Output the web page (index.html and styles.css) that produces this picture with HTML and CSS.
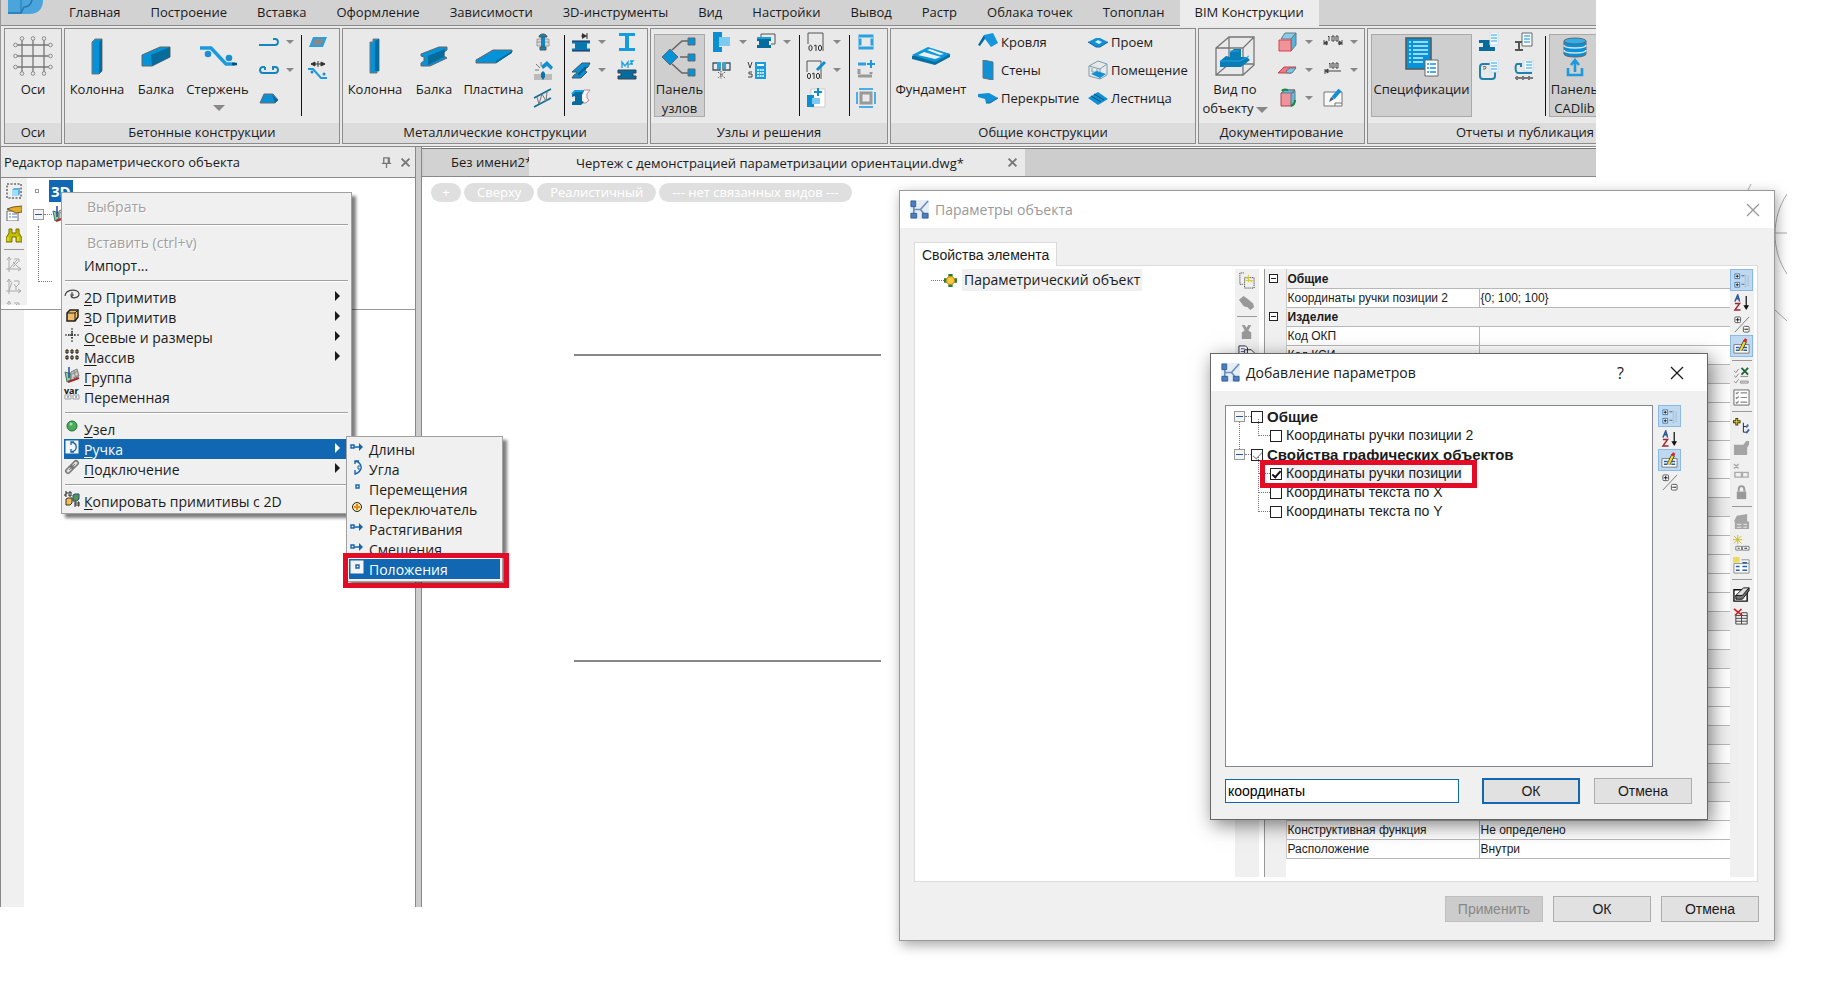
FILE: index.html
```
<!DOCTYPE html>
<html lang="ru">

<head>
    <meta charset="UTF-8">
    <meta name="viewport" content="width=device-width, initial-scale=1.0">
    <title>BIM Конструкции</title>
    <link rel="stylesheet" href="styles.css">
</head>

<body>
    <!-- icons -->
    <svg class="sprite" aria-hidden="true">
        <symbol id="axes" viewBox="0 0 40 40"><path d="M9 4v32M20 4v32M31 4v32M4 9h32M4 20h32M4 31h32" stroke="#777" stroke-width="1.3" fill="none"/><g fill="#eee" stroke="#888"><circle cx="9" cy="2.500" r="1.800"/><circle cx="20" cy="2.500" r="1.800"/><circle cx="31" cy="2.500" r="1.800"/><circle cx="9" cy="37.500" r="1.800"/><circle cx="20" cy="37.500" r="1.800"/><circle cx="31" cy="37.500" r="1.800"/><circle cx="2.500" cy="9" r="1.800"/><circle cx="2.500" cy="20" r="1.800"/><circle cx="2.500" cy="31" r="1.800"/><circle cx="37.500" cy="9" r="1.800"/><circle cx="37.500" cy="20" r="1.800"/><circle cx="37.500" cy="31" r="1.800"/></g></symbol>
        <symbol id="column" viewBox="0 0 40 40"><path d="M15 6l3-3h7v32l-3 3h-7z" fill="#0492d8" stroke="#777"/><path d="M22 6l3-3v32l-3 3z" fill="#076b9c"/></symbol>
        <symbol id="beam" viewBox="0 0 40 40"><path d="M6 19l18-8h10v10l-18 9H6z" fill="#0492d8" stroke="#666"/><path d="M15 19l19-8v10l-18 9z" fill="#076b9c"/></symbol>
        <symbol id="rod" viewBox="0 0 40 40"><path d="M2 12h11l15 16h9" fill="none" stroke="#1c9ae0" stroke-width="3.500"/><circle cx="10" cy="18" r="3.300" fill="#1c8fd2"/><circle cx="31" cy="22" r="3.300" fill="#1c8fd2"/><path d="M34 28h5" stroke="#064d75" stroke-width="2.500"/></symbol>
        <symbol id="steel-column" viewBox="0 0 40 40"><path d="M15 6h3V3h6v32h-2v2h-7z" fill="#0492d8" stroke="#777"/><path d="M20 5l4-2v32h-4z" fill="#076b9c"/></symbol>
        <symbol id="steel-beam" viewBox="0 0 40 40"><path d="M7 18L25 11h8v3l-3 2v4l3 2-17 8H7v-3l3-2v-4l-3-1z" fill="#0492d8" stroke="#666"/><path d="M14 20l17-7-1 8-16 8z" fill="#076b9c"/></symbol>
        <symbol id="plate" viewBox="0 0 40 40"><path d="M2 24l17-10h19v2L22 27H2z" fill="#0492d8" stroke="#666"/><path d="M22 25l16-10v2L22 27z" fill="#076b9c"/></symbol>
        <symbol id="nodes" viewBox="0 0 40 40"><path d="M12 13l10-9h7M20 20h8M12 27l10 9h7" stroke="#666" stroke-width="1.600" fill="none"/><path d="M10 12l8 8-8 8-8-8zM28 1h7v7h-7zM28 17h7v7h-7zM28 32h7v7h-7z" fill="#0492d8" stroke="#666"/></symbol>
        <symbol id="foundation" viewBox="0 0 40 40"><path d="M1 20l16-8 22 6v3l-15 8L1 23z" fill="#066f9f"/><path d="M1 19l16-8 22 7-15 8z" fill="#0c98dc"/><path d="M7 19l6-3 17 5-6 2zM16 14l3-1 14 5-4 1z" fill="#eee"/></symbol>
        <symbol id="view-cube" viewBox="0 0 40 40"><path d="M1 12L14 1h25v28L28 39H1zM1 12h27v27M28 12L39 1M14 1v27L1 39M14 28h25" fill="none" stroke="#777" stroke-width="1.300"/><path d="M5 25l6-5 4 1v-5l4-3h7v8h6l3 3-9 7H5z" fill="#087db8"/><path d="M5 25h20l9-5M15 15h9" stroke="#25a3e3" fill="none"/></symbol>
        <symbol id="spec" viewBox="0 0 40 40"><path d="M4 1h25v31H4z" fill="#0492d8" stroke="#555" stroke-width="1.500"/><path d="M7 5h2m2 0h15M7 9h2m2 0h15M7 13h2m2 0h15M7 17h2m2 0h15M7 21h2m2 0h10M7 25h2m2 0h10" stroke="#cdeeff" stroke-width="1.300"/><path d="M23 23h13v16H23z" fill="#fff" stroke="#666"/><path d="M25 27h2m1 0h6m-9 4h2m1 0h6m-9 4h2m1 0h6" stroke="#1397dc" stroke-width="1.300"/></symbol>
        <symbol id="database" viewBox="0 0 40 40"><path d="M9 4v13c0 4 22 4 22 0V4z" fill="#0492d8" stroke="#666"/><ellipse cx="20" cy="4" rx="11" ry="3" fill="#2fb0ee" stroke="#666"/><path d="M9 8c0 4 22 4 22 0M9 13c0 4 22 4 22 0" fill="none" stroke="#ddd" stroke-width="1.600"/><path d="M20 35V24m-4 4l4-5 4 5M13 31v7h14v-7" fill="none" stroke="#1c9ae0" stroke-width="2.600"/></symbol>

        <symbol id="hook1" viewBox="0 0 20 20"><path d="M0 13h16c4 0 4-6 0-6h-2" fill="none" stroke="#1685bd" stroke-width="1.800"/></symbol>
        <symbol id="hook2" viewBox="0 0 20 20"><path d="M6 7H4c-4 0-4 6 0 6h12c4 0 4-6 0-6h-2v3M6 7v3" fill="none" stroke="#1685bd" stroke-width="1.900"/></symbol>
        <symbol id="prism" viewBox="0 0 20 20"><path d="M1 15L5 6h9l5 6-3 3z" fill="#0b8fd0" stroke="#667"/><path d="M13 7l6 5-3 3z" fill="#076b9c"/></symbol>
        <symbol id="slab" viewBox="0 0 20 20"><path d="M5 5h14l-4 10H1z" fill="#27a1e2"/><path d="M7 7h9l-3 6H4z" fill="#888"/></symbol>
        <symbol id="stretch-rod" viewBox="0 0 20 20"><path d="M3 4h14M3 4l4-2v4zM17 4l-4-2v4zM10 1v6" stroke="#333" fill="#333"/><path d="M0 9h5l8 9h6" fill="none" stroke="#1c9ae0" stroke-width="2"/><circle cx="4" cy="12" r="1.500" fill="#178bc9"/><circle cx="16" cy="14" r="1.500" fill="#178bc9"/></symbol>
        <symbol id="bolt" viewBox="0 0 20 20"><path d="M4 7h12v7H4z" fill="#d8d8d8" stroke="#999"/><path d="M4 10h12" stroke="#999"/><path d="M10 3v14" stroke="#0b86c2" stroke-width="4"/><path d="M6 5c0-4 8-4 8 0zM7 15h6v3H7z" fill="#0b86c2" stroke="#555"/></symbol>
        <symbol id="weld" viewBox="0 0 20 20"><path d="M1 14h18v6H1z" fill="#bbb"/><path d="M8 6l6-5 6 6-2 3-4-4-4 3z" fill="#118fd0"/><path d="M8 13l2-2 2 2v4l-2 3-2-3z" fill="#0874a9"/><path d="M3 4l4 4M2 10h4M8 2v4" stroke="#777"/></symbol>
        <symbol id="truss" viewBox="0 0 20 20"><path d="M1 10L18 1M1 19l17-9" stroke="#156f94" stroke-width="1.700"/><path d="M4 9l2 7 3-10 4 7 1-9" fill="none" stroke="#777"/></symbol>
        <symbol id="ibeam-x" viewBox="0 0 20 20"><path d="M1 9h18v2.500h-3v5h3V19H1v-2.500h3v-5H1z" fill="#0779ae"/><path d="M1 9h18M1 19h18" stroke="#225"/><path d="M10 4h6m0-3v6" stroke="#333"/><path d="M11 1l5 3-5 3z" fill="#333"/></symbol>
        <symbol id="ibeam-skew" viewBox="0 0 20 20"><path d="M1 12L11 3h8l-2 4-2 1-1 3 2 1-6 6H1l2-3 2-1 1-2z" fill="#0b8fd0" stroke="#456"/><path d="M7 15l8-8" stroke="#065f8c" stroke-width="2"/></symbol>
        <symbol id="ibeam-cut" viewBox="0 0 20 20"><path d="M10 4l3-2h6l-3 4v4l2 2-3 3h-4" fill="#f6f6f6" stroke="#b88"/><path d="M1 6l3-3h9l-2 4v6l2 1-3 3H1v-3l3-1V8L1 9z" fill="#076b9c"/><path d="M1 6l3-3h9" stroke="#159ee2" stroke-width="2" fill="none"/></symbol>
        <symbol id="ibeam" viewBox="0 0 20 20"><path d="M2 1h16v3H2zM2 16h16v3H2zM8 3h4v14H8z" fill="#149ce0"/></symbol>
        <symbol id="ibeam-area" viewBox="0 0 20 20"><path d="M1 10h18v3h-3v3h3v3H1v-3h3v-3H1z" fill="#076b9c" stroke="#345"/><path d="M5 8V2l3 4 3-4v6M13 1h3l-3 3h3" stroke="#159ee2" stroke-width="1.300" fill="none"/></symbol>
        <symbol id="join" viewBox="0 0 20 20"><path d="M1 0h9v5H7v10h3v5H1z" fill="#0b8fd0"/><path d="M7 5h11v9H7z" fill="#7cc9f2"/></symbol>
        <symbol id="joins" viewBox="0 0 20 20"><path d="M1 3h7v7H1zM11 3h7v7h-7z" fill="none" stroke="#456" stroke-width="1.300"/><path d="M5 2h4v7H5zM11 2h3v7h-3z" fill="#2ca4e0"/><path d="M6 12l7 6m0-6l-7 6m3-7v8" stroke="#555" stroke-dasharray="1.500 1"/></symbol>
        <symbol id="beam-note" viewBox="0 0 20 20"><path d="M5 6V2h14v10h-4" fill="none" stroke="#555"/><path d="M1 6h14v3h-2v4h2v3H1v-3h2V9H1z" fill="#076b9c"/><path d="M1 6h14" stroke="#159ee2" stroke-width="2"/></symbol>
        <symbol id="calc" viewBox="0 0 20 20"><path d="M1 2l2 6 2-6M5 12H2v2h3v3H1" fill="none" stroke="#444"/><path d="M8 2h11v17H8z" fill="#159ee2"/><path d="M10 5h7" stroke="#fff" stroke-width="2"/><path d="M10 10h7m-7 3h7m-7 3h7" stroke="#fff" stroke-width="1.600" stroke-dasharray="2 .6"/></symbol>
        <symbol id="doc010" viewBox="0 0 20 20"><path d="M2 12V1h15v18" fill="none" stroke="#555"/><ellipse cx="4.500" cy="16" rx="1.600" ry="2.700" fill="none" stroke="#333"/><path d="M8 14l2-1v6" fill="none" stroke="#333"/><ellipse cx="14" cy="16" rx="1.600" ry="2.700" fill="none" stroke="#333"/></symbol>
        <symbol id="doc010-edit" viewBox="0 0 20 20"><path d="M1 12V1h14v18" fill="none" stroke="#555"/><path d="M19 2l-8 8" stroke="#0b8fd0" stroke-width="3"/><ellipse cx="3" cy="16" rx="1.600" ry="2.700" fill="none" stroke="#333"/><path d="M6 14l2-1v6" fill="none" stroke="#333"/><ellipse cx="12" cy="16" rx="1.600" ry="2.700" fill="none" stroke="#333"/></symbol>
        <symbol id="join-add" viewBox="0 0 20 20"><path d="M5 1h14v18H5z" fill="#fff" stroke="#ccc"/><path d="M1 7h7v3H6v6h2v3H1z" fill="#0b8fd0"/><path d="M6 10h8v6H6z" fill="#7cc9f2"/><path d="M8 4h8m-4-4v8" stroke="#0b8fd0" stroke-width="2"/></symbol>
        <symbol id="frame" viewBox="0 0 20 20"><path d="M4 4h12v12H4z" fill="none" stroke="#2aa2e2" stroke-width="3"/><path d="M3 6h3M14 6h3M3 14h3M14 14h3" stroke="#e9e9e9"/></symbol>
        <symbol id="frame-add" viewBox="0 0 20 20"><path d="M2 16h14M3 9v5M15 12v2" stroke="#999" stroke-width="3"/><path d="M2 4h8" stroke="#2aa2e2" stroke-width="3"/><path d="M11 4h8m-4-4v8" stroke="#1c9ae0" stroke-width="2"/></symbol>
        <symbol id="frame-all" viewBox="0 0 20 20"><path d="M5 5h10v10H5z" fill="none" stroke="#999" stroke-width="3"/><path d="M3 1h14M3 19h14M1 4v12M19 4v12" stroke="#4aaee8" stroke-width="2"/></symbol>
        <symbol id="roof" viewBox="0 0 20 20"><path d="M0 13L6 3l3 1-7 10z" fill="#08699a"/><path d="M6 3l9-2 5 10-7 4-6-8z" fill="#1596dc"/></symbol>
        <symbol id="wall" viewBox="0 0 20 20"><path d="M5 0l10 2v18L5 18z" fill="#1190d5" stroke="#5b7584"/></symbol>
        <symbol id="floor" viewBox="0 0 20 20"><path d="M0 6l11-1 9 5-8 5H8l-1-4-7-2z" fill="#1190d5"/><path d="M8 15h4l8-5" fill="none" stroke="#08699a"/></symbol>
        <symbol id="opening" viewBox="0 0 20 20"><path d="M0 10l8-4h4l8 4-8 5H8z" fill="#1190d5"/><path d="M7 10l3-2 4 2-3 2z" fill="#dcefff"/><path d="M0 10l8 5h4l8-5" fill="none" stroke="#08699a"/></symbol>
        <symbol id="room" viewBox="0 0 20 20"><path d="M1 6l9-5 9 3v11l-7 4-11-3zM1 6l11 3 7-5M12 9v10M4 8v4h5V9" fill="none" stroke="#7a9dad"/><path d="M3 14l6-3 9 3-6 4z" fill="#1190d5"/></symbol>
        <symbol id="stairs" viewBox="0 0 20 20"><path d="M0 10l10-6 10 7-10 6z" fill="#1190d5"/><path d="M3 8l10 6M6 6l10 6" stroke="#074d70"/></symbol>
        <symbol id="cube-red" viewBox="0 0 20 20"><path d="M7 1h11l-4 6H3z" fill="#87cde7" stroke="#678"/><path d="M18 1v12l-5 6V7z" fill="#54b4da" stroke="#678"/><path d="M1 8h12v11H1z" fill="#f0949b" stroke="#d6434f"/></symbol>
        <symbol id="plane-red" viewBox="0 0 20 20"><path d="M0 13L6 7h12l-5 6z" fill="#ee7983" stroke="#c0424c"/><path d="M8 11l4-3h6l-4 5H9z" fill="#79c7e5" stroke="#678"/></symbol>
        <symbol id="cube-rot" viewBox="0 0 20 20"><path d="M3 5l4-3h10l-3 4-1 12H3z" fill="#f0949b" stroke="#a45"/><path d="M13 6l4-3v10l-4 5zM3 5l4-3h10l-4 3z" fill="#62bbdc" stroke="#678"/><path d="M4 3c1-2 3-2 6-1M17 12c0 3-1 5-4 6" fill="none" stroke="#168b3d" stroke-width="2"/></symbol>
        <symbol id="dim1" viewBox="0 0 20 20"><path d="M1 8v5M19 8v5M1 11h4M15 11h4M1 11l3-2v4zM19 11l-3-2v4z" stroke="#444" fill="#444"/><path d="M5 5l1-1v5M9 4h2v5H9zM13 4h2v5h-2z" fill="none" stroke="#444"/></symbol>
        <symbol id="dim2" viewBox="0 0 20 20"><path d="M2 9v5M2 11h16M2 11l3-2v4z" stroke="#444" fill="#444"/><path d="M6 4l1-1v5M9 3h2v5H9zM13 3h2v5h-2z" fill="none" stroke="#444"/></symbol>
        <symbol id="edit-frame" viewBox="0 0 20 20"><path d="M1 4h18v14H1z" fill="#f8f8f8" stroke="#777"/><path d="M12 18v-3h7" fill="none" stroke="#777"/><path d="M17 2L10 10" stroke="#1190d5" stroke-width="4"/><path d="M8 9l-2 5 5-3z" fill="#456"/></symbol>
        <symbol id="beam-doc" viewBox="0 0 20 20"><path d="M0 8h14v3h-3v4h5v4H0v-4h4v-4H0z" fill="#076b9c"/><path d="M11 0h8v13h-8z" fill="#f2fbff" stroke="#cde"/><path d="M12 3h6m-6 3h6m-6 3h6" stroke="#72bee7" stroke-width="1.500"/></symbol>
        <symbol id="ibeam-doc" viewBox="0 0 20 20"><path d="M1 9h8v2H6v6h3v2H1v-2h3v-6H1z" fill="#555"/><path d="M8 1h10v13H8z" fill="#f8fdff" stroke="#666"/><path d="M10 4h6m-6 3h6m-6 3h6" stroke="#55b2e5" stroke-width="1.500"/></symbol>
        <symbol id="rebar-doc" viewBox="0 0 20 20"><rect x="1" y="4" width="15" height="15" rx="3" fill="none" stroke="#2080ae" stroke-width="2"/><path d="M4 7c4-2 4 3 0 2" fill="none" stroke="#555"/><path d="M11 0h8v12h-8z" fill="#f2fbff" stroke="#cde"/><path d="M12 3h6m-6 3h6m-6 3h6" stroke="#72bee7" stroke-width="1.500"/></symbol>
        <symbol id="hook-doc" viewBox="0 0 20 20"><path d="M7 7V4H3c-2 0-2 9 1 9h14" fill="none" stroke="#2080ae" stroke-width="2"/><path d="M1 18h18M3 16v4m6-4v4m6-4v4" stroke="#777" stroke-width="2"/><path d="M10 0h9v11h-9z" fill="#f2fbff" stroke="#cde"/><path d="M12 2h6m-6 3h6m-6 3h6" stroke="#72bee7" stroke-width="1.500"/></symbol>

        <symbol id="app-icon" viewBox="0 0 20 20"><path d="M0 0h20v20H0z" fill="#e6edf5"/><path d="M4 4v12M4 10h7l8-9M11 10l5 6" fill="none" stroke="#6c90bc" stroke-width="1.800"/><path d="M1 1h5v6H1zM1 14h6v5H1zM13 14h6v5h-6z" fill="#4c7fbd" stroke="#345f98"/></symbol>
        <symbol id="cross" viewBox="0 0 14 14"><path d="M1 1l12 12M13 1L1 13" stroke="currentColor" stroke-width="1.300"/></symbol>
        <symbol id="cross-bold" viewBox="0 0 14 14"><path d="M2 2l10 10M12 2L2 12" stroke="currentColor" stroke-width="2.400"/></symbol>
        <symbol id="pin" viewBox="0 0 12 12"><path d="M3 1h6v6H3zM1 7h10M6 7v5M8 1v6" fill="none" stroke="#777" stroke-width="1.400"/></symbol>

        <symbol id="select" viewBox="0 0 16 16"><path d="M1 1h14v14H1z" fill="none" stroke="#222" stroke-dasharray="2 1.500"/><path d="M6 7l2-2h6v6l-2 2H6z" fill="#56b5e8"/><path d="M6 7h6v6H6z" fill="#a2dcf8"/></symbol>
        <symbol id="props" viewBox="0 0 16 16"><path d="M1 6h11v10H1z" fill="#fff" stroke="#667"/><path d="M3 9h2m1 0h5M3 12h2m1 0h5" stroke="#547cb6"/><path d="M1 4l6-2 9-1v6l-6 1-4-2z" fill="#e0ad2d" stroke="#765b18"/></symbol>
        <symbol id="binoculars" viewBox="0 0 16 16"><path d="M3 2h3v4h4V2h3v4l3 5v4h-6v-5H6v5H0v-4l3-5z" fill="#c3bd00" stroke="#746f00"/><path d="M2 10v4M12 10v4" stroke="#f4f06a"/></symbol>
        <symbol id="axis-x" viewBox="0 0 16 16"><path d="M3 16V2M1 4l2-3 2 3M0 13h15M12 11l3 2-3 2M3 13l8-9M8 3h5v3M7 6l5 5m0-5l-5 5" fill="none" stroke="#aaa"/></symbol>
        <symbol id="axis-y" viewBox="0 0 16 16"><path d="M3 16V2M1 4l2-3 2 3M0 13h15M12 11l3 2-3 2M3 13l3-9M8 3h5v3M8 6l2 3 3-3m-3 3v3" fill="none" stroke="#aaa"/></symbol>
        <symbol id="group" viewBox="0 0 16 16"><path d="M1 5l6 2v6l-4 2z" fill="#8fcca4" stroke="#3c7b58"/><path d="M7 5l6-3 2 7-8 5z" fill="#ccc" stroke="#777"/><path d="M8 7l6-3M9 11l6-3M10 4l2 8" stroke="#888"/><path d="M5 0v11" stroke="#22489b" stroke-width="1.500"/><path d="M4 15l11-4" stroke="#a32832" stroke-width="2"/></symbol>
        <symbol id="prim2d" viewBox="0 0 16 16"><path d="M1 9c1-8 14-7 14-2 0 4-7 5-8 2M8 5v6M6 8h4" fill="none" stroke="#444" stroke-width="1.200"/></symbol>
        <symbol id="prim3d" viewBox="0 0 16 16"><path d="M3 6l3-3h8v7l-3 4H3z" fill="#f3bb67" stroke="#222" stroke-width="1.500"/><path d="M3 6h8v8M11 6l3-3" fill="none" stroke="#222"/></symbol>
        <symbol id="centre" viewBox="0 0 16 16"><path d="M8 1v14M1 8h14" stroke="#222" stroke-dasharray="2 1"/><path d="M8 4v8M4 8h8" stroke="#333" stroke-width="1.600" stroke-dasharray="1 1"/></symbol>
        <symbol id="array" viewBox="0 0 16 16"><path d="M2 3h2v3H2zM7 3h2v3H7zM12 3h2v3h-2zM2 9h2v3H2zM7 9h2v3H7zM12 9h2v3h-2z" fill="#f5c66e" stroke="#111"/></symbol>
        <symbol id="fields" viewBox="0 0 16 6"><path d="M1 1h6v4H1zM9 1h6v4H9z" fill="#fff" stroke="#999"/><path d="M3 3h2m6 0h2" stroke="#0868b4"/></symbol>
        <symbol id="node" viewBox="0 0 16 16"><circle cx="8" cy="7" r="5" fill="#48ad5b" stroke="#236b31"/><circle cx="7" cy="5" r="1.500" fill="#a2dfa9"/></symbol>
        <symbol id="handle" viewBox="0 0 16 16"><path d="M1 1h14v14H1z" fill="#f4f4f4" stroke="#1167b1"/><path d="M7 3c7 1 7 9 0 10M7 6V3h3M7 10v3h3" fill="none" stroke="#1167b1" stroke-width="1.300"/></symbol>
        <symbol id="link" viewBox="0 0 16 16"><path d="M4 12l8-8" stroke="#777" stroke-width="6" stroke-linecap="round"/><path d="M4 12l2-2M10 6l2-2" stroke="#ddd" stroke-width="3" stroke-linecap="round"/><path d="M5 11l6-6" stroke="#777"/></symbol>
        <symbol id="copy2d" viewBox="0 0 16 16"><path d="M1 1h2v2H1v2h2M5 1h2v4H5zM10 11h2v4h-2m0-2h2m2-2h1v4h-1z" fill="none" stroke="#222"/><path d="M9 4l2-1h4v5l-2 2H9z" fill="#529756" stroke="#274c73"/><path d="M2 8l2-1h4v5l-2 2H2z" fill="#f2be54" stroke="#332"/></symbol>
        <symbol id="length" viewBox="0 0 16 16"><path d="M2 6h3v3H2zM5 8h8" fill="none" stroke="#1565ac" stroke-width="1.400"/><path d="M10 4l4 4-4 4z" fill="#1565ac"/></symbol>
        <symbol id="angle" viewBox="0 0 16 16"><path d="M6 2c8 2 8 10 0 13M6 5V2h4M7 15H6v-4" fill="none" stroke="#1565ac" stroke-width="1.400"/><path d="M9 7h3v3H9z" fill="#f0f0f0" stroke="#1565ac"/></symbol>
        <symbol id="move" viewBox="0 0 16 16"><path d="M7 6h3v3H7z" fill="none" stroke="#1565ac" stroke-width="1.400"/></symbol>
        <symbol id="switch" viewBox="0 0 16 16"><circle cx="8" cy="8" r="4.500" fill="#fbe9a8" stroke="#222"/><path d="M8 5v6M5 8h6" stroke="#e98b12" stroke-width="2"/></symbol>
        <symbol id="position" viewBox="0 0 16 16"><path d="M1 1h14v14H1z" fill="#f4f4f4" stroke="#1167b1"/><path d="M7 6h3v3H7z" fill="none" stroke="#1565ac" stroke-width="1.400"/></symbol>
        <symbol id="object" viewBox="0 0 12 12"><path d="M5 0h2v12H5zM0 5h12v2H0z" fill="#258032"/><path d="M4 0h4v3H4zM4 9h4v3H4zM0 4h3v4H0zM9 4h3v4H9z" fill="#258032"/><circle cx="6" cy="6" r="3.600" fill="#f9c944" stroke="#d19010"/></symbol>

        <symbol id="cat" viewBox="0 0 18 18"><path d="M2 2h5v5H2zM2 11h5v5H2z" fill="#fff" stroke="#3777b6"/><path d="M3 4.500h3m-1.500-1.500v3M3 13.500h3m-1.500-1.500v3" stroke="#111"/><path d="M9 4h3m-3 9h3" stroke="#567"/><path d="M13 3v13M16 4v12" stroke="#8d9ab6" stroke-dasharray="1 1"/></symbol>
        <symbol id="sort" viewBox="0 0 18 18"><path d="M2 8l3-7 2 7M3 5h4" stroke="#26509e" fill="none" stroke-width="1.500"/><path d="M2 10h5l-5 7h6" stroke="#a02832" fill="none" stroke-width="1.500"/><path d="M14 2v13" stroke="#111" stroke-width="1.300"/><path d="M11 12h6l-3 5z" fill="#111"/></symbol>
        <symbol id="plusminus" viewBox="0 0 18 18"><path d="M2 17L17 1" stroke="#777"/><rect x="2" y="1" width="6" height="6" rx="1" fill="#fff" stroke="#555"/><rect x="11" y="11" width="6" height="6" rx="1" fill="#fff" stroke="#555"/><path d="M3 4h4M5 2v4M12 14h4" stroke="#111"/></symbol>
        <symbol id="edit-prop" viewBox="0 0 18 18"><path d="M1 7h16v9H1z" fill="#fff" stroke="#777"/><path d="M3 10h4M3 13h4M11 10h4M11 13h4" stroke="#225da5" stroke-width="1.500"/><path d="M8 13l5-10" stroke="#333" stroke-width="4"/><path d="M8 13l5-10" stroke="#f1d734" stroke-width="2.500"/><path d="M12 4l2-3" stroke="#d8242a" stroke-width="3"/></symbol>
        <symbol id="checks-x" viewBox="0 0 18 18"><path d="M1 4l2 2 3-4M1 9l2 2 3-4M1 15l2 2 3-4M8 15h8v2H8zM8 10h8" fill="none" stroke="#888"/><path d="M9 1l7 7m0-7L9 8" stroke="#1d6636" stroke-width="2"/></symbol>
        <symbol id="checks" viewBox="0 0 18 18"><path d="M1 1h16v16H1z" fill="#fff" stroke="#666"/><path d="M3 4l1 1 2-2M3 9l1 1 2-2M3 14l1 1 2-2M8 4h7M8 9h7M8 14h7" fill="none" stroke="#888" stroke-width="1.300"/></symbol>
        <symbol id="tree-add" viewBox="0 0 18 18"><path d="M4 0v8M0 4h8" stroke="#3b3a12" stroke-width="3"/><path d="M4 1v6M1 4h6" stroke="#f1dc37"/><path d="M11 5v10h3M11 9h3" fill="none" stroke="#222"/><path d="M14 10l2-3M14 16l3-4" stroke="#4167b0" stroke-width="2"/></symbol>
        <symbol id="grey-edit" viewBox="0 0 18 18"><path d="M1 5h10l3-4h3v4l-2 3v8H1z" fill="#a5a5a5"/></symbol>
        <symbol id="grey-x" viewBox="0 0 18 18"><path d="M1 2l5 5m0-5L1 7M2 11h7v5H2zM10 11h6v5h-6z" fill="none" stroke="#aaa" stroke-width="1.500"/></symbol>
        <symbol id="lock" viewBox="0 0 18 18"><path d="M4 8h10v8H4z" fill="#999"/><path d="M6 8V6c0-5 6-5 6 0v2" fill="none" stroke="#999" stroke-width="2"/></symbol>
        <symbol id="grey-table" viewBox="0 0 18 18"><path d="M4 3l11-2v8H1zM2 9h15v8H2z" fill="#a5a5a5"/><path d="M4 12h5m2 0h4M4 15h5m2 0h4" stroke="#eee"/></symbol>
        <symbol id="new-field" viewBox="0 0 18 18"><path d="M5 0v10M0 5h10M1 1l8 8M9 1L1 9" stroke="#c9bb29"/><path d="M3 12h6v4H3zM10 12h7v4h-7z" fill="#fff" stroke="#777"/><path d="M5 14h2m5 0h3" stroke="#123"/></symbol>
        <symbol id="new-table" viewBox="0 0 18 18"><path d="M1 7h16v10H1zM9 3h8v4" fill="#fff" stroke="#888"/><path d="M3 10h4M3 14h4M10 6h5M10 10h5M10 14h5" stroke="#245fa9" stroke-width="1.500"/><path d="M0 0h7v6H0z" fill="#eadd58"/></symbol>
        <symbol id="eraser" viewBox="0 0 18 18"><path d="M1 4h14v12H1z" fill="#fff" stroke="#111" stroke-width="1.500"/><path d="M3 10l8-8h6l-7 9H3z" fill="#ddd" stroke="#111"/><path d="M3 10h7l7-8v3l-7 9H3z" fill="#777" stroke="#111"/></symbol>
        <symbol id="del-table" viewBox="0 0 18 18"><path d="M3 8h12v9H3zM3 11h12M3 14h12M9 5v12M9 5h6v4" fill="none" stroke="#444"/><path d="M1 1l9 7M9 1L2 8" stroke="#c91e24" stroke-width="1.700"/></symbol>
        <symbol id="dotted-new" viewBox="0 0 18 18"><path d="M2 1v12h4M3 1h3M7 6h10v11H7z" fill="none" stroke="#222" stroke-dasharray="1 1"/><path d="M8 5l7 6M11 3v8M8 9h8" stroke="#d6c933"/></symbol>
        <symbol id="puzzle" viewBox="0 0 18 18"><path d="M1 6l5-4 4 3 6 5 1 4-4 3-3-3-4-1z" fill="#999"/></symbol>
        <symbol id="scissors" viewBox="0 0 18 18"><path d="M4 2h3l2 3 2-3h3l-3 6 3 2v7H4v-7l3-2z" fill="#999"/></symbol>
        <symbol id="copy" viewBox="0 0 18 18"><path d="M1 1h7l2 2v10H1zM7 5h7l3 3v9H7z" fill="#fff" stroke="#223"/><path d="M3 4h4M3 7h4M9 9h5" stroke="#447"/></symbol>
    </svg>

    <div class="app">
        <header class="ribbon">
            <nav class="tabs">
                <svg class="logo" viewBox="0 0 36 14"><path d="M0 0h35c0 8-4 14-14 14H0z" fill="#4aa5dc"/><path d="M0 13h13l3-6c4 0 7-3 8-7" fill="none" stroke="#2877ac" stroke-width="1.500"/><path d="M13 0v13" stroke="#2877ac"/></svg>
                <a href="#">Главная</a>
                <a href="#">Построение</a>
                <a href="#">Вставка</a>
                <a href="#">Оформление</a>
                <a href="#">Зависимости</a>
                <a href="#">3D-инструменты</a>
                <a href="#">Вид</a>
                <a href="#">Настройки</a>
                <a href="#">Вывод</a>
                <a href="#">Растр</a>
                <a href="#">Облака точек</a>
                <a href="#">Топоплан</a>
                <a href="#" class="current">BIM Конструкции</a>
            </nav>

            <div class="panels">
                <section class="panel">
                    <div class="panel-body axes">
                        <button class="big"><svg><use href="#axes"/></svg>Оси</button>
                    </div>
                    <h2>Оси</h2>
                </section>

                <section class="panel">
                    <div class="panel-body concrete">
                        <button class="big"><svg><use href="#column"/></svg>Колонна</button>
                        <button class="big"><svg><use href="#beam"/></svg>Балка</button>
                        <button class="big"><svg><use href="#rod"/></svg>Стержень<i class="caret large"></i></button>
                        <div class="tools">
                            <button class="tool" aria-label="Крюк"><svg><use href="#hook1"/></svg><i class="caret"></i></button>
                            <button class="tool" aria-label="Хомут"><svg><use href="#hook2"/></svg><i class="caret"></i></button>
                            <button class="tool" aria-label="Призма"><svg><use href="#prism"/></svg></button>
                        </div>
                        <div class="tools ruled">
                            <button class="tool" aria-label="Сетка"><svg><use href="#slab"/></svg></button>
                            <button class="tool" aria-label="Растянуть"><svg><use href="#stretch-rod"/></svg></button>
                        </div>
                    </div>
                    <h2>Бетонные конструкции</h2>
                </section>

                <section class="panel">
                    <div class="panel-body metal">
                        <button class="big"><svg><use href="#steel-column"/></svg>Колонна</button>
                        <button class="big"><svg><use href="#steel-beam"/></svg>Балка</button>
                        <button class="big"><svg><use href="#plate"/></svg>Пластина</button>
                        <div class="tools">
                            <button class="tool" aria-label="Болт"><svg><use href="#bolt"/></svg></button>
                            <button class="tool" aria-label="Сварка"><svg><use href="#weld"/></svg></button>
                            <button class="tool" aria-label="Ферма"><svg><use href="#truss"/></svg></button>
                        </div>
                        <div class="tools ruled">
                            <button class="tool" aria-label="Удлинить"><svg><use href="#ibeam-x"/></svg><i class="caret"></i></button>
                            <button class="tool" aria-label="Разрезать"><svg><use href="#ibeam-skew"/></svg><i class="caret"></i></button>
                            <button class="tool" aria-label="Вырез"><svg><use href="#ibeam-cut"/></svg></button>
                        </div>
                        <div class="tools">
                            <button class="tool" aria-label="Профиль"><svg><use href="#ibeam"/></svg></button>
                            <button class="tool" aria-label="Площадь"><svg><use href="#ibeam-area"/></svg></button>
                        </div>
                    </div>
                    <h2>Металлические конструкции</h2>
                </section>

                <section class="panel">
                    <div class="panel-body joints">
                        <button class="big pressed"><svg><use href="#nodes"/></svg>Панель<br>узлов</button>
                        <div class="tools">
                            <div class="tool-row">
                                <button class="tool" aria-label="Узел"><svg><use href="#join"/></svg><i class="caret"></i></button>
                                <button class="tool" aria-label="Аннотация"><svg><use href="#beam-note"/></svg><i class="caret"></i></button>
                            </div>
                            <div class="tool-row loose">
                                <button class="tool" aria-label="Узлы"><svg><use href="#joins"/></svg></button>
                                <button class="tool" aria-label="Расчет"><svg><use href="#calc"/></svg></button>
                            </div>
                        </div>
                        <div class="tools ruled">
                            <button class="tool" aria-label="Документ"><svg><use href="#doc010"/></svg><i class="caret"></i></button>
                            <button class="tool" aria-label="Правка"><svg><use href="#doc010-edit"/></svg><i class="caret"></i></button>
                            <button class="tool" aria-label="Добавить узел"><svg><use href="#join-add"/></svg></button>
                        </div>
                        <div class="tools ruled">
                            <button class="tool" aria-label="Рамка"><svg><use href="#frame"/></svg></button>
                            <button class="tool" aria-label="Добавить рамку"><svg><use href="#frame-add"/></svg></button>
                            <button class="tool" aria-label="Все рамки"><svg><use href="#frame-all"/></svg></button>
                        </div>
                    </div>
                    <h2>Узлы и решения</h2>
                </section>

                <section class="panel">
                    <div class="panel-body common">
                        <button class="big"><svg><use href="#foundation"/></svg>Фундамент</button>
                        <div class="tools labelled">
                            <button class="tool"><svg><use href="#roof"/></svg>Кровля</button>
                            <button class="tool"><svg><use href="#wall"/></svg>Стены</button>
                            <button class="tool"><svg><use href="#floor"/></svg>Перекрытие</button>
                        </div>
                        <div class="tools labelled">
                            <button class="tool"><svg><use href="#opening"/></svg>Проем</button>
                            <button class="tool"><svg><use href="#room"/></svg>Помещение</button>
                            <button class="tool"><svg><use href="#stairs"/></svg>Лестница</button>
                        </div>
                    </div>
                    <h2>Общие конструкции</h2>
                </section>

                <section class="panel">
                    <div class="panel-body docs">
                        <button class="big"><svg><use href="#view-cube"/></svg>Вид по<br><span>объекту<i class="caret large"></i></span></button>
                        <div class="tools">
                            <button class="tool" aria-label="Вид"><svg><use href="#cube-red"/></svg><i class="caret"></i></button>
                            <button class="tool" aria-label="Разрез"><svg><use href="#plane-red"/></svg><i class="caret"></i></button>
                            <button class="tool" aria-label="Поворот"><svg><use href="#cube-rot"/></svg><i class="caret"></i></button>
                        </div>
                        <div class="tools">
                            <button class="tool" aria-label="Размер"><svg><use href="#dim1"/></svg><i class="caret"></i></button>
                            <button class="tool" aria-label="Отметка"><svg><use href="#dim2"/></svg><i class="caret"></i></button>
                            <button class="tool" aria-label="Правка вида"><svg><use href="#edit-frame"/></svg></button>
                        </div>
                    </div>
                    <h2>Документирование</h2>
                </section>

                <section class="panel">
                    <div class="panel-body reports">
                        <button class="big pressed"><svg><use href="#spec"/></svg>Спецификации</button>
                        <div class="tools">
                            <div class="tool-row loose">
                                <button class="tool" aria-label="Отчет по балкам"><svg><use href="#beam-doc"/></svg></button>
                                <button class="tool" aria-label="Отчет по профилям"><svg><use href="#ibeam-doc"/></svg></button>
                            </div>
                            <div class="tool-row loose">
                                <button class="tool" aria-label="Отчет по арматуре"><svg><use href="#rebar-doc"/></svg></button>
                                <button class="tool" aria-label="Отчет по стержням"><svg><use href="#hook-doc"/></svg></button>
                            </div>
                        </div>
                        <div class="rule"></div>
                        <button class="big pressed"><svg><use href="#database"/></svg>Панель<br>CADlib</button>
                    </div>
                    <h2>Отчеты и публикация</h2>
                </section>
            </div>
        </header>

        <main class="workspace">
            <aside class="editor">
                <div class="editor-head">
                    <span>Редактор параметрического объекта</span>
                    <svg><use href="#pin"/></svg>
                    <svg><use href="#cross-bold"/></svg>
                </div>
                <div class="editor-top">
                    <div class="editor-tools">
                        <svg><use href="#select"/></svg>
                        <svg><use href="#props"/></svg>
                        <svg><use href="#binoculars"/></svg>
                        <hr>
                        <svg><use href="#axis-x"/></svg>
                        <svg><use href="#axis-y"/></svg>
                        <svg><use href="#axis-x"/></svg>
                    </div>
                    <div class="editor-tree">
                        <div class="root"><span class="bullet"></span><b>3D</b></div>
                        <div class="branch"><span class="expander"></span><span class="dots"></span><svg><use href="#group"/></svg></div>
                        <div class="stem"></div>
                    </div>
                </div>
                <div class="editor-bottom"></div>
            </aside>

            <section class="drawing">
                <div class="doc-tabs">
                    <a href="#" class="doc">Без имени2*</a>
                    <a href="#" class="doc open">Чертеж с демонстрацией параметризации ориентации.dwg*<svg><use href="#cross-bold"/></svg></a>
                </div>
                <div class="view-bar">
                    <button>+</button>
                    <button>Сверху</button>
                    <button>Реалистичный</button>
                    <button>--- нет связанных видов ---</button>
                </div>
                <svg class="model" viewBox="0 0 307 308"><path d="M0 1h307M0 307h307" stroke="#111"/></svg>
            </section>
        </main>
    </div>

    <svg class="compass" viewBox="0 0 47 145"><path d="M11 0L7 8M47 10C31 34 31 66 47 90M35 49h12M35 126l12 11" fill="none" stroke="#aaa"/></svg>

    <ul class="menu main-menu">
        <li class="off">Выбрать</li>
        <li class="line"></li>
        <li class="off">Вставить (ctrl+v)</li>
        <li>Импорт...</li>
        <li class="line"></li>
        <li class="sub"><svg><use href="#prim2d"/></svg><span><u>2</u>D Примитив</span></li>
        <li class="sub"><svg><use href="#prim3d"/></svg><span><u>3</u>D Примитив</span></li>
        <li class="sub"><svg><use href="#centre"/></svg><span><u>О</u>севые и размеры</span></li>
        <li class="sub"><svg><use href="#array"/></svg><span><u>М</u>ассив</span></li>
        <li><svg><use href="#group"/></svg><span><u>Г</u>руппа</span></li>
        <li><span class="var-icon">var<svg><use href="#fields"/></svg></span>Переменная</li>
        <li class="line"></li>
        <li><svg><use href="#node"/></svg><span><u>У</u>зел</span></li>
        <li class="sub hover"><svg><use href="#handle"/></svg><span><u>Р</u>учка</span></li>
        <li class="sub"><svg><use href="#link"/></svg><span><u>П</u>одключение</span></li>
        <li class="line"></li>
        <li><svg><use href="#copy2d"/></svg><span><u>К</u>опировать примитивы с 2D</span></li>
    </ul>

    <ul class="menu handle-menu">
        <li><svg><use href="#length"/></svg>Длины</li>
        <li><svg><use href="#angle"/></svg>Угла</li>
        <li><svg><use href="#move"/></svg>Перемещения</li>
        <li><svg><use href="#switch"/></svg>Переключатель</li>
        <li><svg><use href="#length"/></svg>Растягивания</li>
        <li><svg><use href="#length"/></svg>Смещения</li>
        <li class="hover marked"><svg><use href="#position"/></svg>Положения</li>
    </ul>

    <section class="window object-window">
        <div class="title">
            <svg class="title-icon"><use href="#app-icon"/></svg>
            <h1>Параметры объекта</h1>
            <button class="close" aria-label="Закрыть"><svg><use href="#cross"/></svg></button>
        </div>
        <div class="window-body">
            <button class="page-tab">Свойства элемента</button>
            <div class="page">
                <div class="object-tree"><span class="dots"></span><svg><use href="#object"/></svg><span class="name">Параметрический объект</span></div>
                <div class="side">
                    <button aria-label="Новый"><svg><use href="#dotted-new"/></svg></button>
                    <button aria-label="Компонент"><svg><use href="#puzzle"/></svg></button>
                    <hr>
                    <button aria-label="Вырезать"><svg><use href="#scissors"/></svg></button>
                    <button aria-label="Копировать"><svg><use href="#copy"/></svg></button>
                </div>
                <div class="sheet">
                    <table>
                        <colgroup>
                            <col class="col-fold">
                            <col class="col-name">
                            <col>
                        </colgroup>
                        <tbody>
                            <tr class="head"><td><span class="fold"></span></td><th colspan="2">Общие</th></tr>
                            <tr><td></td><td>Координаты ручки позиции 2</td><td>{0; 100; 100}</td></tr>
                            <tr class="head"><td><span class="fold"></span></td><th colspan="2">Изделие</th></tr>
                            <tr><td></td><td>Код ОКП</td><td></td></tr>
                            <tr><td></td><td>Код КСИ</td><td></td></tr>
                            <tr class="head"><td></td><th colspan="2"></th></tr>
                            <tr><td></td><td></td><td></td></tr>
                            <tr><td></td><td></td><td></td></tr>
                            <tr><td></td><td></td><td></td></tr>
                            <tr><td></td><td></td><td></td></tr>
                            <tr><td></td><td></td><td></td></tr>
                            <tr><td></td><td></td><td></td></tr>
                            <tr class="head"><td></td><th colspan="2"></th></tr>
                            <tr><td></td><td></td><td></td></tr>
                            <tr><td></td><td></td><td></td></tr>
                            <tr><td></td><td></td><td></td></tr>
                            <tr><td></td><td></td><td></td></tr>
                            <tr><td></td><td></td><td></td></tr>
                            <tr class="head"><td></td><th colspan="2"></th></tr>
                            <tr><td></td><td></td><td></td></tr>
                            <tr class="head"><td></td><th colspan="2"></th></tr>
                            <tr><td></td><td></td><td></td></tr>
                            <tr><td></td><td></td><td></td></tr>
                            <tr><td></td><td></td><td></td></tr>
                            <tr class="head"><td></td><th colspan="2"></th></tr>
                            <tr><td></td><td></td><td></td></tr>
                            <tr class="head"><td></td><th colspan="2"></th></tr>
                            <tr class="head"><td></td><th colspan="2"></th></tr>
                            <tr><td></td><td></td><td></td></tr>
                            <tr><td></td><td>Конструктивная функция</td><td>Не определено</td></tr>
                            <tr><td></td><td>Расположение</td><td>Внутри</td></tr>
                        </tbody>
                    </table>
                </div>
                <div class="side">
                    <button class="on" aria-label="По категориям"><svg><use href="#cat"/></svg></button>
                    <button aria-label="По алфавиту"><svg><use href="#sort"/></svg></button>
                    <button aria-label="Свернуть"><svg><use href="#plusminus"/></svg></button>
                    <button class="on" aria-label="Редактировать"><svg><use href="#edit-prop"/></svg></button>
                    <hr>
                    <button aria-label="Снять отметки"><svg><use href="#checks-x"/></svg></button>
                    <button aria-label="Отметки"><svg><use href="#checks"/></svg></button>
                    <hr>
                    <button aria-label="Добавить"><svg><use href="#tree-add"/></svg></button>
                    <button aria-label="Изменить"><svg><use href="#grey-edit"/></svg></button>
                    <button aria-label="Удалить"><svg><use href="#grey-x"/></svg></button>
                    <button aria-label="Блокировка"><svg><use href="#lock"/></svg></button>
                    <hr>
                    <button aria-label="Таблица"><svg><use href="#grey-table"/></svg></button>
                    <button aria-label="Новое поле"><svg><use href="#new-field"/></svg></button>
                    <button aria-label="Новая таблица"><svg><use href="#new-table"/></svg></button>
                    <hr>
                    <button aria-label="Очистить"><svg><use href="#eraser"/></svg></button>
                    <button aria-label="Удалить таблицу"><svg><use href="#del-table"/></svg></button>
                </div>
            </div>
            <div class="actions">
                <button class="btn" disabled>Применить</button>
                <button class="btn">ОК</button>
                <button class="btn">Отмена</button>
            </div>
        </div>
    </section>

    <section class="window add-window">
        <div class="title">
            <svg class="title-icon"><use href="#app-icon"/></svg>
            <h1>Добавление параметров</h1>
            <button class="help">?</button>
            <button class="close" aria-label="Закрыть"><svg><use href="#cross"/></svg></button>
        </div>
        <div class="add-body">
            <div class="picker">
                <ul class="params">
                    <li>
                        <span class="expander"></span><span class="dots"></span><input type="checkbox" id="p1"><label for="p1">Общие</label>
                        <ul>
                            <li><span class="dots"></span><input type="checkbox" id="p2"><label for="p2">Координаты ручки позиции 2</label></li>
                        </ul>
                    </li>
                    <li>
                        <span class="expander"></span><span class="dots"></span><input type="checkbox" id="p3" class="partial" checked><label for="p3">Свойства графических объектов</label>
                        <ul>
                            <li class="marked"><span class="dots"></span><input type="checkbox" id="p4" checked><label for="p4">Координаты ручки позиции</label></li>
                            <li><span class="dots"></span><input type="checkbox" id="p5"><label for="p5">Координаты текста по X</label></li>
                            <li><span class="dots"></span><input type="checkbox" id="p6"><label for="p6">Координаты текста по Y</label></li>
                        </ul>
                    </li>
                </ul>
                <div class="side">
                    <button class="on" aria-label="По категориям"><svg><use href="#cat"/></svg></button>
                    <button aria-label="По алфавиту"><svg><use href="#sort"/></svg></button>
                    <button class="on" aria-label="Редактировать"><svg><use href="#edit-prop"/></svg></button>
                    <button aria-label="Свернуть"><svg><use href="#plusminus"/></svg></button>
                </div>
            </div>
            <div class="add-actions">
                <input type="text" aria-label="Поиск" value="координаты">
                <button class="btn default">ОК</button>
                <button class="btn">Отмена</button>
            </div>
        </div>
    </section>
</body>

</html>
```
FILE: styles.css
```
*,
*::before,
*::after {
    box-sizing: border-box;
}

body {
    margin: 0;
    position: relative;
    min-height: 100vh;
    background: #fff;
    color: #1b1b1b;
    font-family: "Open Sans", "Noto Sans", sans-serif;
    font-size: 13px;
}

button {
    margin: 0;
    padding: 0;
    border: 0;
    background: none;
    color: inherit;
    font: inherit;
}

a {
    color: inherit;
    text-decoration: none;
}

h1, h2, ul {
    margin: 0;
    padding: 0;
    font-size: inherit;
    font-weight: normal;
    list-style: none;
}

.sprite {
    display: none;
}

.app {
    margin-right: 238px;
}

/* ribbon */
.ribbon {
    overflow: hidden;
    background: #e9e9e9;
    border-bottom: 1px solid #888;
    border-left: 1px solid #999;
}

.tabs {
    display: flex;
    height: 26px;
    padding-left: 7px;
    background: #d2d2d2;
    border-bottom: 1px solid #8a8a8a;
    white-space: nowrap;
}

.logo {
    width: 36px;
    height: 14px;
    margin-right: 10px;
}

.tabs a {
    padding: 0 15px;
    line-height: 25px;
}

.tabs .current {
    height: 26px;
    background: #ececec;
}

.panels {
    display: flex;
    gap: 2px;
    padding: 2px 0 2px 3px;
}

.panel {
    flex: none;
    border: 1px solid #8c8c8c;
}

.panel h2 {
    height: 20px;
    line-height: 19px;
    text-align: center;
    background: #dcdcdc;
}

.panel-body {
    display: grid;
    height: 94px;
}

.axes { grid-template-columns: 56px; }
.concrete { grid-template-columns: 64px 54px 69px 49px 38px; }
.metal { grid-template-columns: 64px 54px 65px 38px 46px 37px; }
.joints { grid-template-columns: 54px 94px 50px 38px; }
.common { grid-template-columns: 80px 110px 114px; }
.docs { grid-template-columns: 72px 45px 48px; }
.reports { grid-template-columns: 104px 73px 1px 54px; width: 314px; }

.big {
    display: flex;
    flex-direction: column;
    align-items: center;
    height: 83px;
    margin-top: 5px;
    line-height: 19px;
    white-space: nowrap;
}

.big svg {
    flex: none;
    width: 40px;
    height: 40px;
    margin: 2px 0 4px;
}

.big br {
    display: none;
}

.pressed {
    margin-left: 3px;
    background: #cfcfcf;
    border: 1px solid #aaa;
    white-space: normal;
}

.pressed svg {
    margin-bottom: 3px;
}

.pressed br {
    display: inline;
}

.caret {
    flex: none;
    display: inline-block;
    border: 4px solid transparent;
    border-top: 4px solid #888;
    border-bottom: 0;
}

.caret.large {
    border-width: 6px;
    border-bottom: 0;
    margin-top: 6px;
    margin-left: 2px;
}

.tools {
    margin-top: -1px;
    padding-left: 7px;
}

.ruled {
    position: relative;
}

.ruled::before {
    content: "";
    position: absolute;
    left: 0;
    top: 7px;
    bottom: 7px;
    border-left: 1px solid #111;
}

.rule {
    margin: 7px 0;
    background: #111;
}

.tool {
    display: flex;
    align-items: center;
    gap: 7px;
    height: 28px;
    white-space: nowrap;
}

.tool svg {
    flex: none;
    width: 20px;
    height: 20px;
}

.tool-row {
    display: flex;
    gap: 9px;
}

.loose {
    gap: 15px;
}

.labelled .tool {
    gap: 3px;
}

/* workspace */
.workspace {
    display: flex;
    min-height: 760px;
    background: #ccc;
}

.editor {
    display: flex;
    flex-direction: column;
    flex: none;
    width: 416px;
    margin-right: 5px;
    background: #fff;
    border-left: 1px solid #888;
    border-right: 1px solid #888;
}

.editor-head {
    display: flex;
    align-items: center;
    gap: 8px;
    height: 31px;
    padding: 0 4px 0 3px;
    background: #e9e9e9;
    border-bottom: 1px solid #888;
}

.editor-head span {
    flex: 1;
}

.editor-head svg {
    width: 11px;
    height: 11px;
    color: #777;
}

.editor-top {
    display: flex;
    height: 132px;
    border-bottom: 1px solid #999;
}

.editor-tools {
    display: flex;
    flex-direction: column;
    align-items: center;
    gap: 6px;
    width: 26px;
    height: 127px;
    padding-top: 5px;
    overflow: hidden;
    background: #f0f0f0;
}

.editor-tools svg {
    flex: none;
    width: 16px;
    height: 16px;
}

.editor-tools hr {
    width: 20px;
    margin: 0;
    border: 0;
    border-top: 1px solid #999;
}

.editor-tree {
    padding: 2px 0 0 6px;
}

.root {
    display: flex;
    align-items: center;
    gap: 10px;
}

.root b {
    padding: 0 2px;
    background: #1167b1;
    color: #fff;
    font-size: 15px;
    line-height: 22px;
}

.bullet {
    width: 4px;
    height: 4px;
    margin-left: 2px;
    border: 1px solid #999;
}

.branch {
    display: flex;
    align-items: center;
    height: 24px;
}

.branch svg {
    width: 16px;
    height: 16px;
}

.stem {
    width: 14px;
    height: 56px;
    margin-left: 5px;
    border: 1px dotted #777;
    border-width: 0 0 1px 1px;
}

.expander {
    flex: none;
    width: 11px;
    height: 11px;
    border: 1px solid #999;
    background: linear-gradient(#235a9c, #235a9c) center / 7px 1px no-repeat #f4f4f4;
}

.dots {
    flex: none;
    width: 8px;
    border-top: 1px dotted #777;
}

.editor-bottom {
    flex: 1;
    border-left: 23px solid #f0f0f0;
}

.drawing {
    flex: 1;
    min-width: 0;
    background: #fff;
    border-left: 1px solid #888;
}

.doc-tabs {
    display: flex;
    height: 29px;
    margin-top: 1px;
    padding: 0 2px;
    background: #cdcdcd;
    border-top: 1px solid #777;
    border-bottom: 1px solid #888;
    line-height: 26px;
    white-space: nowrap;
}

.doc {
    width: 105px;
    padding-left: 27px;
    overflow: hidden;
    background: #d2d2d2;
}

.open {
    display: flex;
    align-items: center;
    justify-content: space-between;
    width: 496px;
    padding: 0 7px 0 47px;
    background: #e9e9e9;
}

.open svg {
    width: 11px;
    height: 11px;
    color: #777;
}

.view-bar {
    display: flex;
    gap: 3px;
    padding: 6px 9px;
}

.view-bar button {
    height: 19px;
    min-width: 30px;
    padding: 0 13px;
    border-radius: 10px;
    background: #dfdfdf;
    color: #fff;
    line-height: 19px;
}

.view-bar button:first-child {
    padding: 0;
}

.model {
    display: block;
    width: 307px;
    height: 308px;
    margin: 146px 0 0 152px;
}

.compass {
    position: absolute;
    left: 1740px;
    top: 184px;
    width: 47px;
    height: 145px;
}

/* context menus */
.menu {
    position: absolute;
    padding: 2px;
    background: #f0f0f0;
    border: 1px solid #a0a0a0;
    box-shadow: 4px 4px 3px rgba(0, 0, 0, .5);
    font-size: 14px;
    line-height: 21px;
    white-space: nowrap;
}

.main-menu {
    left: 61px;
    top: 192px;
    width: 291px;
}

.handle-menu {
    left: 346px;
    top: 436px;
    width: 157px;
}

.menu li {
    display: flex;
    position: relative;
    height: 20px;
    padding-left: 20px;
}

.menu li > svg,
.var-icon {
    flex: none;
    width: 16px;
    height: 16px;
    margin: 0 4px 0 -20px;
}

.menu .line {
    height: 12px;
    padding: 0;
}

.menu .line::before {
    content: "";
    flex: 1;
    height: 2px;
    margin: 5px 1px 0;
    border-top: 1px solid #a0a0a0;
    border-bottom: 1px solid #fff;
}

.menu .off {
    height: 24px;
    padding-left: 23px;
    color: #a0a0a0;
    text-shadow: 1px 1px #fff;
    line-height: 24px;
}

.menu .hover {
    background: #1167b1;
    color: #fff;
}

.menu .sub::after {
    content: "";
    width: 5px;
    height: 10px;
    margin: 4px 9px 0 auto;
    border: 5px solid transparent;
    border-left-color: currentColor;
    border-right: 0;
}

.menu u {
    text-underline-offset: 2px;
}

.var-icon {
    color: #111;
    font-size: 9px;
    font-weight: bold;
    line-height: 7px;
}

.var-icon svg {
    display: block;
    width: 16px;
    height: 6px;
}

.menu .marked::after {
    content: "";
    position: absolute;
    inset: -6px -9px -9px -6px;
    border: 5px solid #e30b25;
}

/* windows */
.window {
    position: absolute;
    background: #f0f0f0;
    border: 1px solid #999;
    box-shadow: 2px 4px 12px rgba(0, 0, 0, .35);
    font-family: "Liberation Sans", sans-serif;
    font-size: 14px;
}

.object-window {
    left: 899px;
    top: 190px;
    width: 876px;
}

.title {
    display: flex;
    align-items: center;
    height: 37px;
    padding: 0 14px 0 10px;
    background: #fff;
    font-family: "Open Sans", sans-serif;
}

.title-icon {
    width: 19px;
    height: 19px;
    margin-right: 6px;
}

.title h1 {
    flex: 1;
}

.close svg {
    display: block;
    width: 14px;
    height: 14px;
}

.object-window .title {
    color: #999;
}

.window-body {
    padding: 14px 15px 18px 14px;
}

.page-tab {
    position: relative;
    display: block;
    height: 24px;
    margin-bottom: -1px;
    padding: 0 7px;
    background: #fff;
    border: 1px solid #dcdcdc;
    border-bottom: 0;
}

.page {
    display: flex;
    margin-right: 1px;
    padding: 3px 3px 4px;
    background: #fff;
    border: 1px solid #dcdcdc;
}

.object-tree {
    display: flex;
    flex: 1;
    height: 22px;
    padding-left: 13px;
    align-items: center;
    font-family: "Open Sans", sans-serif;
}

.object-tree .dots {
    width: 13px;
}

.object-tree svg {
    width: 13px;
    height: 13px;
}

.name {
    margin-left: 5px;
    padding: 0 2px;
    background: #f0f0f0;
    line-height: 22px;
}

.side {
    width: 24px;
    flex: none;
    background: #f0f0f0;
}

.side button {
    display: flex;
    align-items: center;
    justify-content: center;
    width: 23px;
    height: 22px;
    border: 1px solid transparent;
}

.side svg {
    width: 17px;
    height: 17px;
}

.side .on {
    background: #bfd9f0;
    border-color: #8dbae3;
}

.side hr {
    width: 20px;
    height: 1px;
    margin: 3px 2px;
    border: 0;
    background: #999;
}

.sheet {
    width: 466px;
    height: 608px;
    margin-left: 5px;
    border-left: 1px solid #999;
    background: linear-gradient(90deg, #f0f0f0 21px, #fff 21px);
}

table {
    width: 100%;
    table-layout: fixed;
    border-collapse: collapse;
    font-size: 12px;
    line-height: 14px;
}

.col-fold {
    width: 21px;
}

.col-name {
    width: 193px;
}

tr {
    height: 19px;
}

td, th {
    height: 19px;
    padding: 2px 1px 1px;
    border-bottom: 1px solid #b8b8b8;
    text-align: left;
    white-space: nowrap;
}

td:first-child {
    padding: 0 4px;
    border-bottom: 0;
    border-right: 1px solid #ccc;
}

td:nth-child(2) {
    border-right: 1px solid #b8b8b8;
}

.head th {
    background: #f0f0f0;
}

.fold {
    display: block;
    width: 9px;
    height: 9px;
    border: 1px solid #222;
    background: linear-gradient(#222, #222) center / 5px 1px no-repeat #fff;
}

.actions {
    display: flex;
    justify-content: flex-end;
    gap: 10px;
    padding-top: 14px;
}

.btn {
    width: 98px;
    height: 26px;
    border: 1px solid #adadad;
    background: #e1e1e1;
}

.btn:disabled {
    background: #ccc;
    border-color: #bfbfbf;
    color: #888;
}

.btn.default {
    border: 2px solid #1167b1;
}

.add-window {
    left: 1210px;
    top: 353px;
    width: 498px;
    border-color: #666;
    box-shadow: 3px 5px 18px rgba(0, 0, 0, .5);
}

.add-window .title {
    padding-right: 23px;
}

.help {
    margin-right: 46px;
    font-size: 16px;
}

.add-body {
    padding: 14px 15px 15px 14px;
}

.picker {
    display: flex;
    gap: 5px;
    padding-right: 10px;
}

.params {
    flex: 1;
    min-height: 362px;
    padding: 1px 0 0 8px;
    background: #fff;
    border: 1px solid #828790;
}

.params li {
    position: relative;
    display: flex;
    flex-wrap: wrap;
    align-items: center;
    line-height: 19px;
}

.params > li:first-child::before {
    content: "";
    position: absolute;
    left: 5px;
    top: 15px;
    height: 27px;
    border-left: 1px dotted #777;
}

.params > li > label {
    font-size: 15px;
    font-weight: bold;
}

.params ul {
    width: 100%;
    margin-left: 24px;
}

/* stem down to each child row */
.params ul li::before {
    content: "";
    position: absolute;
    left: 0;
    top: -7px;
    height: 17px;
    border-left: 1px dotted #777;
}

.params > li > .dots {
    width: 6px;
}

.params ul .dots {
    width: 12px;
}

.params label {
    margin-left: 4px;
}

.params input {
    appearance: none;
    position: relative;
    width: 12px;
    height: 12px;
    margin: 0;
    border: 1px solid #222;
    background: #fff;
}

.params input:checked::before {
    content: "";
    position: absolute;
    left: 3px;
    top: 0;
    width: 5px;
    height: 9px;
    border: solid #111;
    border-width: 0 2px 2px 0;
    transform: rotate(42deg);
}

.params .partial:checked::before {
    border-color: #888;
    border-width: 0 1px 1px 0;
}

.params .marked::after {
    content: "";
    position: absolute;
    left: 2px;
    top: -4px;
    width: 217px;
    height: 28px;
    border: 5px solid #e30b25;
    z-index: 1;
}

.params .marked label {
    background: #f0f0f0;
}

.add-actions {
    display: flex;
    align-items: center;
    gap: 14px;
    padding-top: 11px;
}

.add-actions input {
    width: 234px;
    height: 24px;
    margin-right: auto;
    padding: 0 2px;
    border: 1px solid #1167b1;
    background: #fff;
    font: inherit;
}
```
